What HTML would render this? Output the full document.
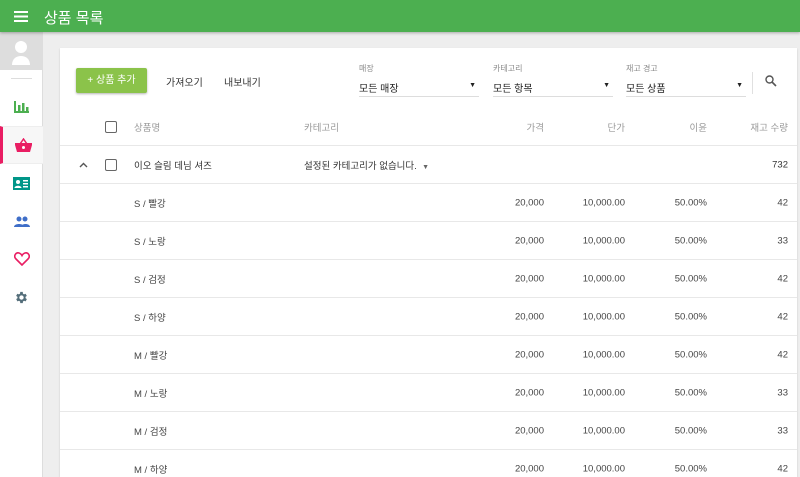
<!DOCTYPE html>
<html><head><meta charset="utf-8"><style>
*{box-sizing:border-box;margin:0;padding:0}
html,body{width:800px;height:477px;overflow:hidden}
body{background:#eeeeee;font-family:"Liberation Sans","Noto Sans CJK KR",sans-serif;position:relative}
.top{position:absolute;left:0;top:0;width:800px;height:32px;background:#4caf50;box-shadow:0 1px 3px rgba(0,0,0,.3);z-index:3}
.top .t{position:absolute;left:44px;top:7px;color:#fff;font-size:15px}
.side{position:absolute;left:0;top:32px;width:43px;height:445px;background:#fff;border-right:1px solid #ddd}
.av{position:absolute;left:0;top:0;width:43px;height:38px;background:#ddd}
.ic{position:absolute;left:0;width:43px;height:38px;display:flex;align-items:center;justify-content:center}
.card{position:absolute;left:60px;top:48px;width:737px;height:429px;background:#fff;box-shadow:0 1px 2px rgba(0,0,0,.15);overflow:hidden}
.abs{position:absolute;white-space:nowrap}
.btn{left:16px;top:20px;width:71px;height:25px;background:#8bc34a;color:#fff;font-size:10px;line-height:25px;text-align:center;border-radius:2px;box-shadow:0 1px 2px rgba(0,0,0,.3)}
.lnk{font-size:10px;color:#333;top:26px}
.sel .lab{font-size:8px;color:#888}
.sel{top:15px;width:120px;height:34px;border-bottom:1px solid #ddd}
.sel .v{position:absolute;top:17px;left:0;font-size:10px;color:#222}
.sel .a{position:absolute;right:3px;top:19px;font-size:7px;color:#222}
.row{position:absolute;left:0;width:737px;border-bottom:1px solid #e8e8e8;font-size:9.5px;color:#444}
.row span{position:absolute;top:50%;transform:translateY(-50%);white-space:nowrap}
.cb{width:12px;height:12px;border:1.5px solid #666;border-radius:2px}
</style></head><body>
<div class="top">
<svg style="position:absolute;left:14px;top:11px" width="14" height="11"><rect y="0" width="14" height="2" fill="#fff"/><rect y="4.5" width="14" height="2" fill="#fff"/><rect y="9" width="14" height="2" fill="#fff"/></svg>
<div class="t">상품 목록</div></div>
<div class="side">
<div class="av"><svg width="43" height="38"><circle cx="21" cy="15" r="6" fill="#fff"/><path d="M12 33c0-6 4-9 9-9s9 3 9 9z" fill="#fff"/></svg></div>
<div style="position:absolute;left:11px;top:46px;width:21px;height:1px;background:#ddd"></div>
<div class="ic" style="top:56px"><svg width="15" height="12"><rect x="0" y="0" width="2" height="12" fill="#4caf50"/><rect x="0" y="10" width="15" height="2" fill="#4caf50"/><rect x="4" y="4" width="2.5" height="8" fill="#4caf50"/><rect x="8" y="2" width="2.5" height="10" fill="#4caf50"/><rect x="12" y="6" width="2.5" height="6" fill="#4caf50"/></svg></div>
<div class="ic" style="top:94px;background:#f7f7f7;border-left:3px solid #e91e63;border-top:1px solid #eee;border-bottom:1px solid #eee"><svg width="17" height="14"><path d="M5 6L8.5 1 12 6" stroke="#e91e63" stroke-width="1.5" fill="none"/><path d="M0 5h17v2l-2 7H2L0 7z" fill="#e91e63"/><circle cx="8.5" cy="9.5" r="1.5" fill="#fff"/></svg></div>
<div class="ic" style="top:132px"><svg width="17" height="13"><rect width="17" height="13" fill="#009688"/><circle cx="5" cy="5" r="2" fill="#fff"/><path d="M1.5 11c0-3 7-3 7 0z" fill="#fff"/><rect x="10" y="3" width="5" height="1.5" fill="#fff"/><rect x="10" y="6" width="5" height="1.5" fill="#fff"/><rect x="10" y="9" width="5" height="1.5" fill="#fff"/></svg></div>
<div class="ic" style="top:170px"><svg width="16" height="11"><circle cx="5" cy="3" r="2.5" fill="#3f6ec8"/><circle cx="11" cy="3" r="2.5" fill="#3f6ec8"/><path d="M0 11c0-4 10-4 10 0z M7 11c0-4 9-4 9 0z" fill="#3f6ec8"/></svg></div>
<div class="ic" style="top:208px"><svg width="16" height="14"><path d="M8 13L2 7C-1 4 2 0 5 1c1.5.5 2.5 1.5 3 2.5C8.5 2.5 9.5 1.5 11 1c3-1 6 3 3 6z" fill="none" stroke="#e91e63" stroke-width="1.6"/></svg></div>
<div class="ic" style="top:246px"><svg width="15" height="15" viewBox="0 0 24 24"><path fill="#546e7a" d="M19.4 13a7.5 7.5 0 000-2l2.1-1.6-2-3.5-2.5 1a7 7 0 00-1.7-1L15 3h-4l-.4 2.9a7 7 0 00-1.7 1l-2.5-1-2 3.5L6.6 11a7.5 7.5 0 000 2l-2.1 1.6 2 3.5 2.5-1a7 7 0 001.7 1L11 21h4l.4-2.9a7 7 0 001.7-1l2.5 1 2-3.5zM13 15.5a3.5 3.5 0 110-7 3.5 3.5 0 010 7z" transform="translate(-1 0)"/></svg></div>
</div>
<div class="card">
<div class="abs btn">+ 상품 추가</div>
<div class="abs lnk" style="left:106px">가져오기</div>
<div class="abs lnk" style="left:164px">내보내기</div>
<div class="abs sel" style="left:299px"><div class="lab">매장</div><div class="v">모든 매장</div><div class="a">▼</div></div>
<div class="abs sel" style="left:433px"><div class="lab">카테고리</div><div class="v">모든 항목</div><div class="a">▼</div></div>
<div class="abs sel" style="left:566px"><div class="lab">재고 경고</div><div class="v">모든 상품</div><div class="a">▼</div></div>
<div class="abs" style="left:692px;top:24px;width:1px;height:22px;background:#e0e0e0"></div>
<svg class="abs" style="left:705px;top:27px" width="12" height="12"><circle cx="4.5" cy="4.5" r="3.5" stroke="#555" stroke-width="1.4" fill="none"/><path d="M7 7l4 4" stroke="#555" stroke-width="1.6"/></svg>

<div class="row" style="top:60px;height:38px;color:#999">
<span class="cb" style="left:45px"></span><span style="left:74px">상품명</span><span style="left:244px">카테고리</span>
<span style="right:253px">가격</span><span style="right:172px">단가</span><span style="right:90px">이윤</span><span style="right:9px">재고 수량</span></div>
<div class="row" style="top:98px;height:38px;color:#333">
<svg style="position:absolute;left:19px;top:16px" width="9" height="6"><path d="M1 5l3.5-3.5L8 5" stroke="#555" stroke-width="1.4" fill="none"/></svg><span class="cb" style="left:45px"></span><span style="left:74px">이오 슬림 데님 셔즈</span><span style="left:244px">설정된 카테고리가 없습니다. &nbsp;<span style="position:static;font-size:7px;color:#666">▼</span></span><span style="right:9px">732</span></div>
<div class="row" style="top:136px;height:38px"><span style="left:74px">S / 빨강</span><span style="right:253px">20,000</span><span style="right:172px">10,000.00</span><span style="right:90px">50.00%</span><span style="right:9px">42</span></div>
<div class="row" style="top:174px;height:38px"><span style="left:74px">S / 노랑</span><span style="right:253px">20,000</span><span style="right:172px">10,000.00</span><span style="right:90px">50.00%</span><span style="right:9px">33</span></div>
<div class="row" style="top:212px;height:38px"><span style="left:74px">S / 검정</span><span style="right:253px">20,000</span><span style="right:172px">10,000.00</span><span style="right:90px">50.00%</span><span style="right:9px">42</span></div>
<div class="row" style="top:250px;height:38px"><span style="left:74px">S / 하양</span><span style="right:253px">20,000</span><span style="right:172px">10,000.00</span><span style="right:90px">50.00%</span><span style="right:9px">42</span></div>
<div class="row" style="top:288px;height:38px"><span style="left:74px">M / 빨강</span><span style="right:253px">20,000</span><span style="right:172px">10,000.00</span><span style="right:90px">50.00%</span><span style="right:9px">42</span></div>
<div class="row" style="top:326px;height:38px"><span style="left:74px">M / 노랑</span><span style="right:253px">20,000</span><span style="right:172px">10,000.00</span><span style="right:90px">50.00%</span><span style="right:9px">33</span></div>
<div class="row" style="top:364px;height:38px"><span style="left:74px">M / 검정</span><span style="right:253px">20,000</span><span style="right:172px">10,000.00</span><span style="right:90px">50.00%</span><span style="right:9px">33</span></div>
<div class="row" style="top:402px;height:38px"><span style="left:74px">M / 하양</span><span style="right:253px">20,000</span><span style="right:172px">10,000.00</span><span style="right:90px">50.00%</span><span style="right:9px">42</span></div>
</div>
</body></html>
